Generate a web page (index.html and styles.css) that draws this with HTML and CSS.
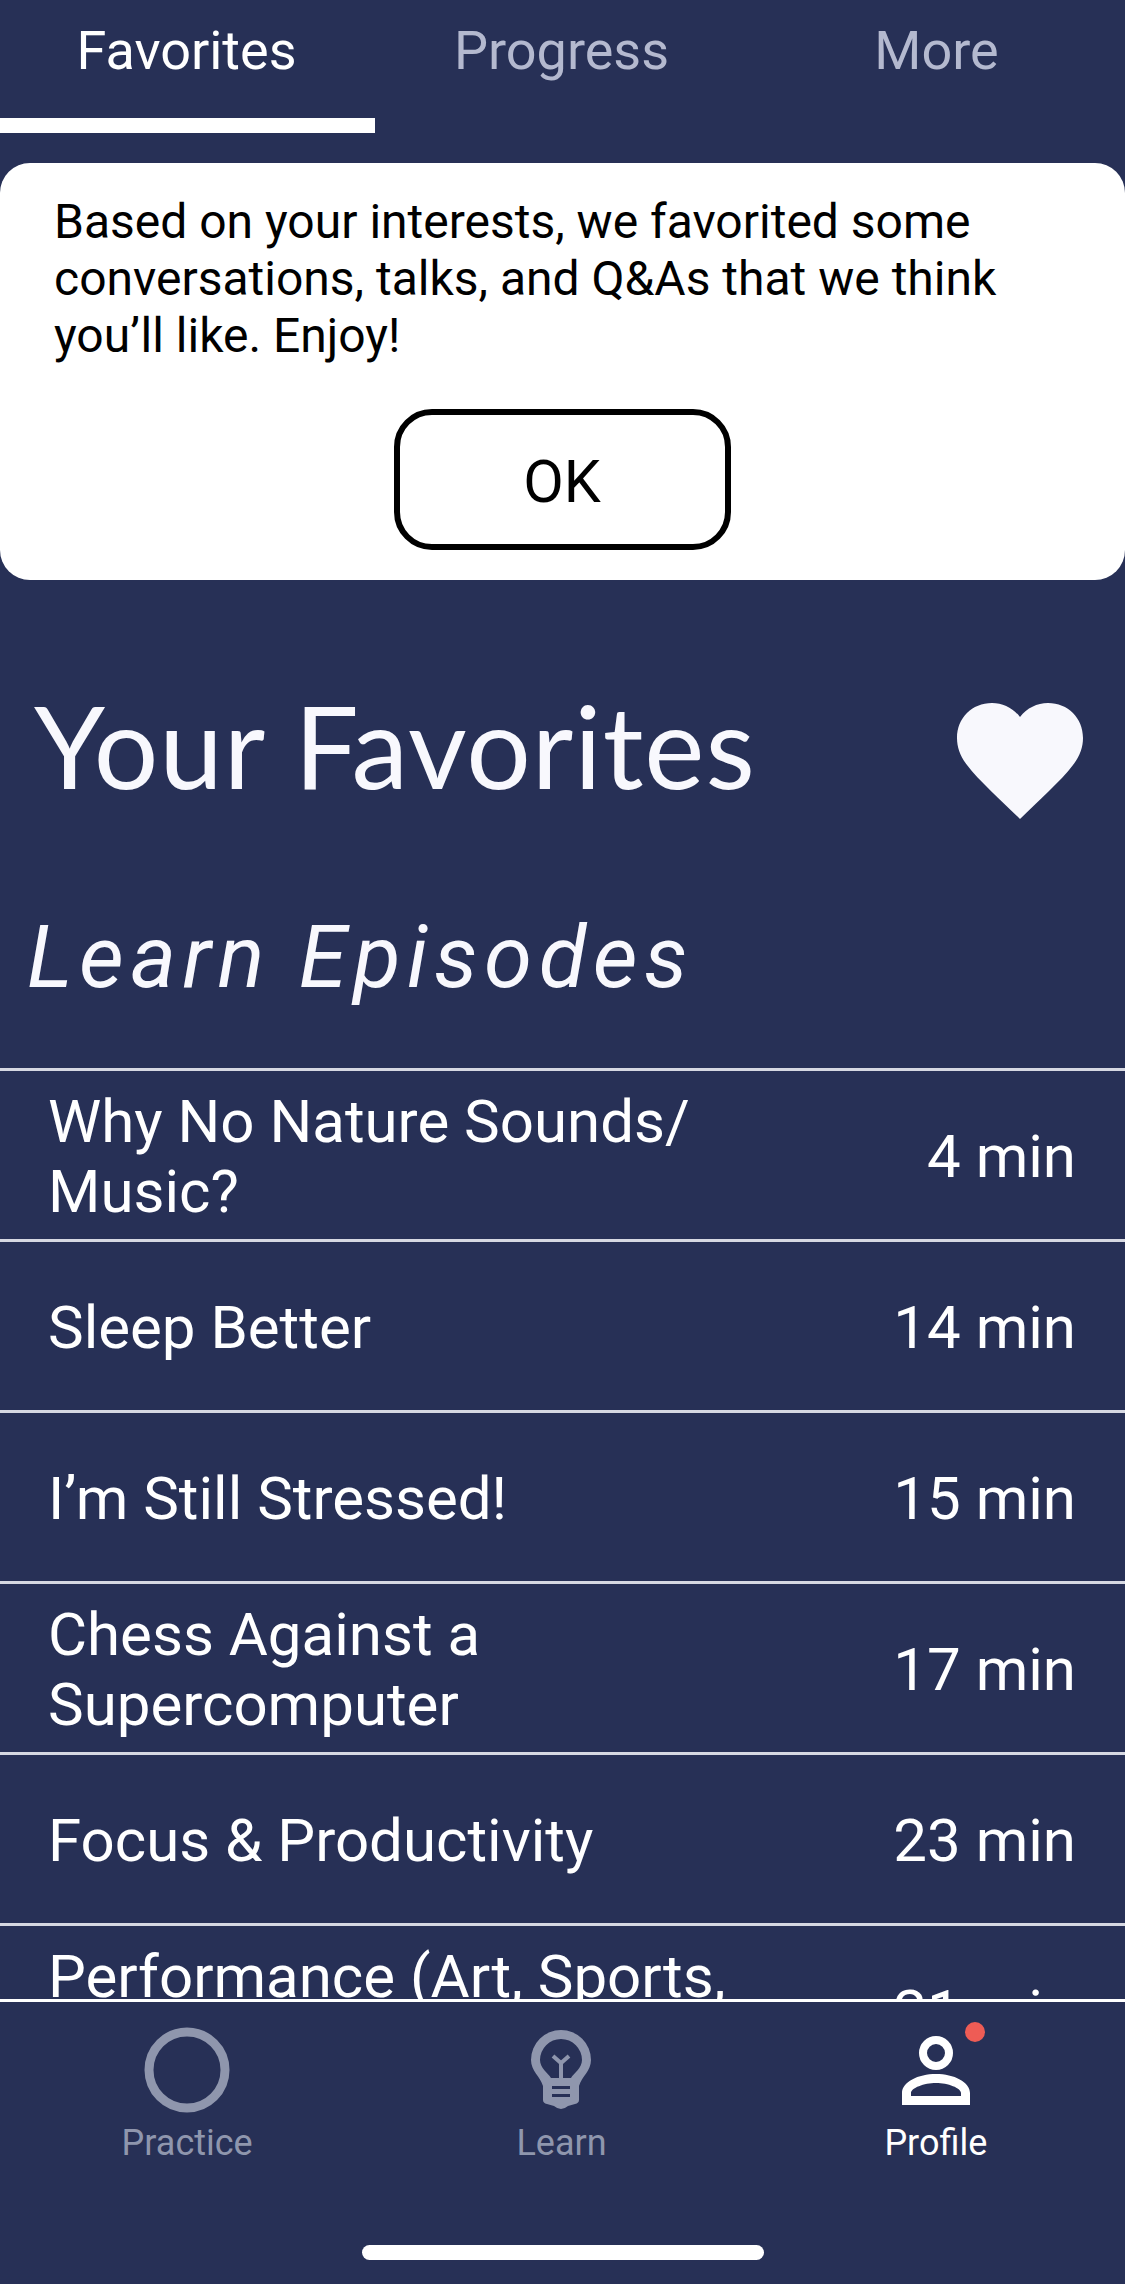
FILE: index.html
```html
<!DOCTYPE html>
<html>

<head>
	<title>Your Favorites</title>
	<link rel="stylesheet" href="styles.css">
</head>

<body>
	<div class="page">
		<div class="tabs">
			<div class="tab tab-active">Favorites</div>
			<div class="tab">Progress</div>
			<div class="tab">More</div>
		</div>

		<div class="notice">
			<p class="notice-text">Based on your interests, we favorited some conversations, talks, and Q&amp;As that we think you’ll like. Enjoy!</p>
			<button class="notice-button" type="button">OK</button>
		</div>

		<div class="title-row">
			<h1 class="title">Your Favorites</h1>
			<svg class="heart" viewBox="0 0 126 116">
				<path d="M63 116 C45 98 22 78 10 62 C3 53 0 44 0 35 C0 15 15 0 35 0 C46 0 56 5 63 14 C70 5 80 0 91 0 C111 0 126 15 126 35 C126 44 123 53 116 62 C104 78 81 98 63 116Z" />
			</svg>
		</div>

		<h2 class="section">Learn Episodes</h2>

		<div class="list">
			<div class="row"><span class="row-name">Why No Nature Sounds/ Music?</span><span class="row-time">4 min</span></div>
			<div class="row"><span class="row-name">Sleep Better</span><span class="row-time">14 min</span></div>
			<div class="row"><span class="row-name">I’m Still Stressed!</span><span class="row-time">15 min</span></div>
			<div class="row"><span class="row-name">Chess Against a Supercomputer</span><span class="row-time">17 min</span></div>
			<div class="row"><span class="row-name">Focus &amp; Productivity</span><span class="row-time">23 min</span></div>
			<div class="row"><span class="row-name">Performance (Art, Sports, Academics)</span><span class="row-time">21 min</span></div>
		</div>

		<div class="nav">
			<div class="nav-item">
				<svg class="nav-icon" viewBox="0 0 86 86">
					<circle cx="43" cy="43" r="38" fill="none" stroke="currentColor" stroke-width="9" />
				</svg>
				<span class="nav-label">Practice</span>
			</div>
			<div class="nav-item">
				<svg class="nav-icon" viewBox="-13 -3 86 86">
					<path fill="currentColor" fill-rule="evenodd" d="M30 0 A30 30 0 0 1 60 30 C60 41 51 46 48 56 L48 70 Q48 73 44 74 L37 76 Q30 82 23 76 L16 74 Q12 73 12 70 L12 56 C9 46 0 41 0 30 A30 30 0 0 1 30 0Z M30 9 A21 21 0 0 0 9 30 C9 38 17 43 20 48 L40 48 C43 43 51 38 51 30 A21 21 0 0 0 30 9Z M21 56 V59 H39 V56Z M21 64 V67 H39 V64Z" />
					<path fill="none" stroke="currentColor" stroke-width="4" d="M30 48 V31 M22 26 L30 33 L38 26" />
				</svg>
				<span class="nav-label">Learn</span>
			</div>
			<div class="nav-item nav-item-active">
				<svg class="nav-icon" viewBox="-9 -9 86 86">
					<circle cx="34" cy="17" r="13" fill="none" stroke="currentColor" stroke-width="8" />
					<path fill="currentColor" fill-rule="evenodd" d="M0 69 V57 C0 46 16 38 34 38 C52 38 68 46 68 57 V69Z M9 60 H59 V57 C59 52 46 47 34 47 C22 47 9 52 9 57Z" />
				</svg>
				<span class="nav-dot"></span>
				<span class="nav-label">Profile</span>
			</div>
		</div>

		<div class="home-area">
			<div class="home-bar"></div>
		</div>
	</div>
</body>

</html>
```

FILE: styles.css
```css
* {
	box-sizing: border-box;
}

html,
body {
	margin: 0;
	padding: 0;
}

body {
	background-color: #273056;
	font-family: Roboto, sans-serif;
	color: #fff;
}

.page {
	display: flex;
	flex-direction: column;
	height: 2284px;
	overflow: hidden;
}

.tabs {
	display: grid;
	grid-template-columns: repeat(3, 1fr);
	height: 133px;
}

.tab {
	padding: 21px 2px 0 0;
	text-align: center;
	font-size: 54px;
	line-height: 60px;
	color: #b4b9cf;
}

.tab-active {
	color: #fff;
	border-bottom: 15px solid #fff;
}

.notice {
	margin-top: 30px;
	height: 417px;
	padding: 30px 55px 0 54px;
	background-color: #fff;
	border-radius: 30px;
	color: #000;
}

.notice-text {
	margin: 0;
	width: 960px;
	font-size: 48px;
	line-height: 57px;
}

.notice-button {
	display: block;
	width: 337px;
	height: 141px;
	margin: 45px auto 0;
	padding: 3px 0 0;
	border: 6px solid #000;
	border-radius: 38px;
	background-color: #fff;
	font-family: Roboto, sans-serif;
	font-size: 59px;
	color: #000;
}

.title-row {
	display: flex;
	justify-content: space-between;
	align-items: flex-start;
	height: 140px;
	margin-top: 99px;
	padding: 0 42px 0 34px;
}

.title {
	margin: 0;
	font-family: Lato, sans-serif;
	font-size: 114px;
	font-weight: 400;
	line-height: 132px;
	letter-spacing: 1px;
	color: #f8f8fd;
}

.heart {
	width: 126px;
	height: 116px;
	margin-top: 24px;
	fill: #f8f8fd;
}

.section {
	margin: 88px 0 0;
	padding-left: 27px;
	font-size: 87px;
	font-style: italic;
	font-weight: 400;
	line-height: 100px;
	letter-spacing: 6.5px;
	color: #f8f8fd;
}

.list {
	flex: 1;
	margin-top: 61px;
	overflow: hidden;
}

.row {
	display: flex;
	justify-content: space-between;
	align-items: center;
	height: 171px;
	padding: 3px 49px 0 48px;
	border-top: 3px solid #d6d8e2;
	font-size: 60px;
	line-height: 70px;
}

.row-name {
	max-width: 700px;
}

.row-time {
	white-space: nowrap;
}

.nav {
	display: grid;
	grid-template-columns: repeat(3, 1fr);
	height: 246px;
	padding: 25px 2px 0 0;
	border-top: 3px solid #fff;
}

.nav-item {
	position: relative;
	display: flex;
	flex-direction: column;
	align-items: center;
	color: #8f96ad;
}

.nav-item-active {
	color: #fff;
}

.nav-icon {
	width: 86px;
	height: 86px;
}

.nav-label {
	margin-top: 8px;
	font-size: 36px;
	line-height: 44px;
}

.nav-dot {
	position: absolute;
	top: -5px;
	left: 216px;
	width: 20px;
	height: 20px;
	border-radius: 50%;
	background-color: #ee5c55;
}

.home-area {
	flex: none;
	height: 39px;
}

.home-bar {
	width: 402px;
	height: 15px;
	margin: 0 auto;
	border-radius: 8px;
	background-color: #fff;
}
```
